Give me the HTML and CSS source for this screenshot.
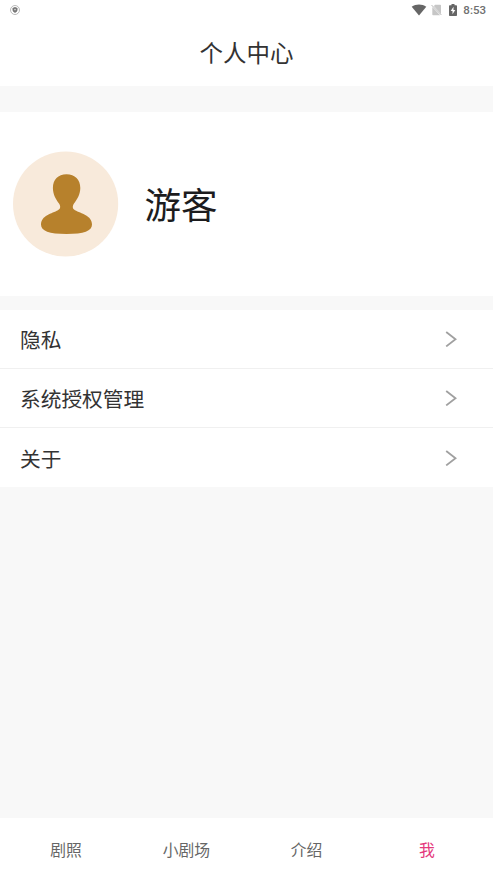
FILE: index.html
```html
<!DOCTYPE html>
<html lang="zh-CN">
<head>
<meta charset="utf-8">
<title>个人中心</title>
<link rel="stylesheet" href="styles.css">
</head>
<body>
<div class="app">
  <div class="status">
    <svg class="shield" width="10" height="10" viewBox="0 0 10 10"><circle cx="5" cy="5" r="4.500" fill="none" stroke="#aaa" stroke-width=".8"/><path d="M5 2 7.500 2.900v1.900C7.500 6.300 6.300 7.300 5 7.900 3.700 7.300 2.500 6.300 2.500 4.800V2.900z" fill="#777"/><circle cx="5" cy="4.600" r=".8" fill="#ddd"/></svg>
    <div class="status-right">
      <svg class="wifi" width="16" height="12" viewBox="0 0 16 12"><path d="M8 11.500.7 2.700C5-.3 11-.3 15.300 2.700z" fill="#666"/></svg>
      <svg class="sim" width="11" height="12" viewBox="0 0 11 12"><path d="M4.200.7h5q.8 0 .8.800v8.400L2.800 2.100zM1.300 3.100 9.200 11.200H2.100q-.8 0-.8-.8z" fill="#c6c6c6"/><path d="M.6 1.100 10.300 10.900" stroke="#aaa" stroke-width=".9"/></svg>
      <svg class="battery" width="8" height="12" viewBox="0 0 8 12"><path d="M2.500 0h3v1.200h1.700q.8 0 .8.800v9.200q0 .8-.8.800H.8q-.8 0-.8-.8V2q0-.8.800-.8h1.700z" fill="#666"/><path d="M4.500 2.700 1.700 7h1.800v3.300L6.300 6H4.500z" fill="#fff"/></svg>
      <span class="clock">8:53</span>
    </div>
  </div>
  <header class="title">个人中心</header>
  <section class="profile">
    <svg class="avatar" width="106" height="106" viewBox="0 0 106 106"><circle cx="52.600" cy="53" r="52.600" fill="#f8eadb"/><path d="M53.500 23.200C62 23.200 67.300 28.500 67.300 37 67.300 43.500 64 48.500 61 52.500 59.200 55.200 59.400 57.800 62 59.200 68 62.300 79 64.500 79 73.500 79 80 71 83 53.500 83S28 80 28 73.500C28 64.500 39 62.300 45 59.200 47.600 57.800 47.800 55.200 46 52.500 43 48.500 39.900 43.500 39.900 37 39.900 28.500 45 23.200 53.500 23.200z" fill="#b7812c"/></svg>
    <span class="name">游客</span>
  </section>
  <main class="list">
    <div class="row"><span>隐私</span><svg width="12" height="16" viewBox="0 0 12 16"><path d="M1.200 1l9.300 7.200L1.200 15.400"/></svg></div>
    <div class="row"><span>系统授权管理</span><svg width="12" height="16" viewBox="0 0 12 16"><path d="M1.200 1l9.300 7.200L1.200 15.400"/></svg></div>
    <div class="row"><span>关于</span><svg width="12" height="16" viewBox="0 0 12 16"><path d="M1.200 1l9.300 7.200L1.200 15.400"/></svg></div>
  </main>
  <nav class="tabs"><span>剧照</span><span>小剧场</span><span>介绍</span><span class="active">我</span></nav>
</div>
</body>
</html>
```
FILE: styles.css
```css
* { box-sizing: border-box; }
body { margin: 0; background: #f8f8f8; color: #333; font-family: "Noto Sans CJK SC", sans-serif; }
.app { height: 878px; display: flex; flex-direction: column; overflow: hidden; }
svg { display: block; flex: none; }
.status { height: 20px; flex: none; background: #fff; display: flex; justify-content: space-between; align-items: center; padding: 0 7px 0 10px; }
.status-right { display: flex; align-items: center; }
.sim { margin-left: 4px; }
.battery { margin-left: 7px; margin-bottom: 1px; }
.clock { margin-left: 6px; font: 500 11.5px/20px Roboto, sans-serif; color: #707070; }
.title { height: 66px; flex: none; background: #fff; text-align: center; font-size: 23.5px; line-height: 65px; }
.profile { height: 184px; flex: none; margin-top: 26px; background: #fff; display: flex; align-items: center; padding-left: 13px; }
.name { margin-left: 25.6px; font-size: 36.5px; line-height: 52px; color: #1c1c1e; }
.list { margin-top: 13.5px; background: #fff; }
.row { height: 59.2px; display: flex; align-items: center; justify-content: space-between; padding: 0 36px 0 20px; border-bottom: 1px solid #f0f0f0; font-size: 20.7px; }
.row:last-child { border-bottom: 0; padding-top: 1px; }
.row path { fill: none; stroke: #a0a0a0; stroke-width: 1.8; }
.tabs { height: 60px; flex: none; margin-top: auto; background: #fff; display: flex; padding: 0 6px; font-size: 15.8px; line-height: 64px; color: #666; }
.tabs span { flex: 1; text-align: center; }
.tabs .active { color: #e43a7c; }
```
